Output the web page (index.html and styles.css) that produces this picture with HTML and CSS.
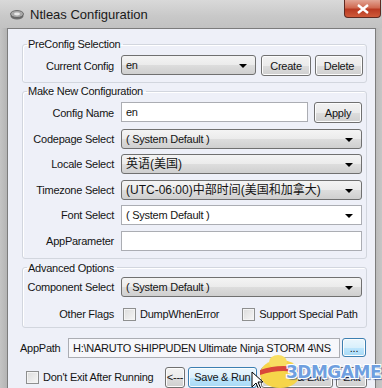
FILE: index.html
```html
<!DOCTYPE html>
<html>
    <head>
        <title>Ntleas Configuration</title>
        <meta charset="utf-8">
        <link rel="stylesheet" href="styles.css">
    </head>
    <body>
        <div class="nt-window">
            <div class="nt-titlebar">
                <svg class="nt-titlebar__icon" width="14" height="10" viewBox="0 0 14 10">
                    <ellipse cx="7" cy="6" rx="6.5" ry="3.5" fill="#6d6d6d"/>
                    <ellipse cx="7" cy="4" rx="6.5" ry="3.5" fill="#a9a9a9" stroke="#5a5a5a" stroke-width="0.8"/>
                    <ellipse cx="7" cy="4" rx="3" ry="1.4" fill="#e8e8e8"/>
                </svg>
                <span class="nt-titlebar__text">Ntleas Configuration</span>
                <div class="nt-titlebar__close">
                    <svg width="12" height="10" viewBox="0 0 12 10">
                        <path d="M1 1 L11 9 M11 1 L1 9" stroke="#fff" stroke-width="2.4"/>
                    </svg>
                </div>
            </div>

            <div class="nt-client">
                <fieldset class="nt-group nt-group--pre">
                    <legend>PreConfig Selection</legend>
                    <div class="nt-form">
                        <label class="nt-form__label">Current Config</label>
                        <div class="nt-form__controls">
                            <div class="nt-combo nt-combo--current">en<i class="nt-combo__arrow"></i></div>
                            <button class="nt-btn nt-btn--create">Create</button>
                            <button class="nt-btn nt-btn--delete">Delete</button>
                        </div>
                    </div>
                </fieldset>

                <fieldset class="nt-group nt-group--new">
                    <legend>Make New Configuration</legend>
                    <div class="nt-form">
                        <label class="nt-form__label">Config Name</label>
                        <div class="nt-form__controls">
                            <div class="nt-input nt-input--name">en</div>
                            <button class="nt-btn nt-btn--apply">Apply</button>
                        </div>

                        <label class="nt-form__label">Codepage Select</label>
                        <div class="nt-combo">( System Default )<i class="nt-combo__arrow"></i></div>

                        <label class="nt-form__label">Locale Select</label>
                        <div class="nt-combo nt-combo--cjk">英语(美国)<i class="nt-combo__arrow"></i></div>

                        <label class="nt-form__label">Timezone Select</label>
                        <div class="nt-combo nt-combo--cjk">(UTC-06:00)中部时间(美国和加拿大)<i class="nt-combo__arrow"></i></div>

                        <label class="nt-form__label">Font Select</label>
                        <div class="nt-combo nt-combo--edit">( System Default )<i class="nt-combo__arrow"></i></div>

                        <label class="nt-form__label">AppParameter</label>
                        <div class="nt-input"></div>
                    </div>
                </fieldset>

                <fieldset class="nt-group nt-group--adv">
                    <legend>Advanced Options</legend>
                    <div class="nt-form">
                        <label class="nt-form__label">Component Select</label>
                        <div class="nt-combo">( System Default )<i class="nt-combo__arrow"></i></div>

                        <label class="nt-form__label">Other Flags</label>
                        <div class="nt-flags">
                            <span class="nt-check"><i class="nt-check__box"></i>DumpWhenError</span>
                            <span class="nt-check"><i class="nt-check__box"></i>Support Special Path</span>
                        </div>
                    </div>
                </fieldset>

                <div class="nt-apppath">
                    <label class="nt-apppath__label">AppPath</label>
                    <div class="nt-input nt-input--path">H:\NARUTO SHIPPUDEN Ultimate Ninja STORM 4\NS</div>
                    <button class="nt-btn nt-btn--blue nt-btn--browse">...</button>
                </div>

                <div class="nt-footer">
                    <span class="nt-check nt-check--noexit"><i class="nt-check__box"></i>Don't Exit After Running</span>
                    <button class="nt-btn nt-btn--back">&lt;---</button>
                    <button class="nt-btn nt-btn--blue nt-btn--run">Save &amp; Run</button>
                    <button class="nt-btn nt-btn--exit">Save &amp; Exit</button>
                    <button class="nt-btn nt-btn--close">Exit</button>
                </div>
            </div>

            <!-- site watermark sitting over the bottom buttons -->
            <div class="nt-watermark">
                <svg class="nt-watermark__chick" width="48" height="34" viewBox="0 0 48 34">
                    <ellipse cx="24" cy="20" rx="20" ry="14" fill="#f6d54a"/>
                    <ellipse cx="22" cy="8" rx="9" ry="7" fill="#f8de62"/>
                    <path d="M4 16 Q24 9 44 14 L44 19 Q24 14 4 21 Z" fill="#d9473a"/>
                    <path d="M36 21 l7 -2 l-2 6 z" fill="#f0a030"/>
                </svg>
                <span class="nt-watermark__text">3DMGAME</span>
                <svg class="nt-watermark__cursor" width="14" height="20" viewBox="0 0 14 20">
                    <path d="M1 1 L1 16 L5 12 L8 19 L10 18 L7 11 L12 11 Z" fill="#fff" stroke="#000" stroke-width="1"/>
                </svg>
            </div>
        </div>
    </body>
</html>
```

FILE: styles.css
```css
* {
    box-sizing: border-box;
}

body {
    margin: 0;
    font-family: "Liberation Sans", Arial, sans-serif;
    font-size: 11px;
    letter-spacing: -0.25px;
    color: #141414;
    background: #bdbdbd;
}

.nt-window {
    position: relative;
    width: 382px;
    height: 388px;
    overflow: hidden;
    background: linear-gradient(to right, #c4c4c4, #b4b4b4 7px, #b9b9b9 375px, #c6c6c6);
}

.nt-titlebar {
    display: flex;
    align-items: center;
    height: 28px;
    padding-left: 10px;
    background: linear-gradient(to bottom, #d9d9d9, #c8c8c8 60%, #c2c2c2);
}

.nt-titlebar__icon {
    margin-top: 2px;
}

.nt-titlebar__text {
    margin-left: 6px;
    font-size: 13px;
    letter-spacing: 0;
    color: #1a1a1a;
}

.nt-titlebar__close {
    display: flex;
    align-items: center;
    justify-content: center;
    align-self: flex-start;
    margin-left: auto;
    margin-right: 1px;
    width: 37px;
    height: 18px;
    border: 1px solid #5e2a22;
    border-top: none;
    border-radius: 0 0 4px 4px;
    background: linear-gradient(to bottom, #e2a595, #d06a52 45%, #b93a22 55%, #cf5a3a);
}

.nt-client {
    margin: 0 6px 0 7px;
    height: 360px;
    padding: 8px 8px 0 14px;
    border: 1px solid #7c7c7c;
    border-bottom: none;
    background: #eef0f8;
}

.nt-group {
    margin: 0;
    padding: 0 4px 6px 0;
    border: 1px solid #d2d6de;
    border-radius: 3px;
    box-shadow: inset 1px 1px 0 #fff;
    min-width: 0;
}

.nt-group legend {
    margin-left: 4px;
    padding: 0 3px 0 1px;
    line-height: 14px;
}

.nt-group--pre .nt-form {
    margin-top: 4px;
}

.nt-group--new {
    margin-top: 1px;
    padding-bottom: 7px;
}

.nt-group--new .nt-form {
    margin-top: 4px;
}

.nt-group--adv {
    margin-top: 2px;
    padding-bottom: 6px;
}

.nt-group--adv .nt-form {
    margin-top: 2px;
    row-gap: 11px;
}

.nt-form {
    display: grid;
    grid-template-columns: 91px 1fr;
    column-gap: 7px;
    row-gap: 5.6px;
    align-items: center;
}

.nt-form__label {
    justify-self: end;
    white-space: nowrap;
}

.nt-form__controls {
    display: flex;
    gap: 5px;
}

.nt-combo {
    position: relative;
    height: 20px;
    line-height: 18px;
    padding: 0 22px 0 4px;
    border: 1px solid #707070;
    border-radius: 3px;
    background: linear-gradient(to bottom, #f4f4f4, #ebebeb 50%, #dddddd 51%, #cfcfcf);
    white-space: nowrap;
    overflow: hidden;
}

.nt-combo--current {
    width: 135px;
}

.nt-combo--cjk {
    font-family: "Liberation Sans", "Noto Sans CJK SC", sans-serif;
    font-size: 12px;
    letter-spacing: 0;
}

.nt-combo--edit {
    border-color: #abadb3;
    border-radius: 0;
    background: #fff;
}

.nt-combo__arrow {
    position: absolute;
    right: 8px;
    top: 8px;
    border-left: 4px solid transparent;
    border-right: 4px solid transparent;
    border-top: 4px solid #000;
}

.nt-input {
    height: 20px;
    line-height: 18px;
    padding: 0 4px;
    border: 1px solid #abadb3;
    background: #fff;
    white-space: nowrap;
    overflow: hidden;
}

.nt-input--name {
    flex: 1;
}

.nt-btn {
    height: 21px;
    padding: 0;
    font-family: inherit;
    font-size: 11px;
    letter-spacing: inherit;
    color: #141414;
    border: 1px solid #707070;
    border-radius: 3px;
    background: linear-gradient(to bottom, #f2f2f2, #ebebeb 50%, #dddddd 51%, #cfcfcf);
    box-shadow: inset 0 0 0 1px #fcfcfc;
}

.nt-btn--create {
    width: 50px;
}

.nt-btn--delete {
    width: 48px;
    margin-left: -1px;
}

.nt-btn--apply {
    width: 48px;
    margin-left: 1px;
}

.nt-btn--blue {
    border-color: #3c7fb1;
    background: linear-gradient(to bottom, #eaf6fd, #d9f0fc 50%, #bee6fd 51%, #a7d9f5);
}

.nt-flags {
    display: flex;
    gap: 23px;
    padding-left: 2px;
}

.nt-check {
    display: inline-flex;
    align-items: center;
    gap: 4px;
    white-space: nowrap;
}

.nt-check__box {
    width: 13px;
    height: 13px;
    border: 1px solid #8e8f8f;
    background: linear-gradient(135deg, #dcdcdc, #f6f6f6);
    box-shadow: inset 0 0 0 1px #f4f4f4;
}

.nt-apppath {
    display: flex;
    align-items: center;
    margin: 10px 0 0 -2px;
}

.nt-apppath__label {
    width: 48px;
}

.nt-input--path {
    width: 272px;
    background: #f7f7fb;
}

.nt-btn--browse {
    width: 24px;
    height: 19px;
    margin-left: 2px;
}

.nt-footer {
    display: flex;
    align-items: center;
    margin: 9px 0 0 4px;
}

.nt-check--noexit {
    margin-right: 12px;
}

.nt-btn--back {
    width: 20px;
}

.nt-btn--run {
    width: 73px;
    margin-left: 3px;
}

.nt-btn--exit {
    width: 76px;
    margin-left: 4px;
}

.nt-btn--close {
    width: 32px;
    margin-left: 3px;
}

.nt-watermark {
    position: absolute;
    left: 250px;
    top: 354px;
    width: 132px;
    height: 34px;
}

.nt-watermark__chick {
    position: absolute;
    left: 6px;
    top: 0;
}

.nt-watermark__text {
    position: absolute;
    left: 36px;
    top: 8px;
    font-family: "DejaVu Sans", sans-serif;
    font-weight: bold;
    font-size: 17px;
    letter-spacing: -0.5px;
    color: #6f9fe0;
    text-shadow: -1px -1px 0 #fff, 1px -1px 0 #fff, -1px 1px 0 #fff, 1px 1px 0 #fff, 2px 2px 1px rgba(40, 70, 140, 0.6);
}

.nt-watermark__cursor {
    position: absolute;
    left: 1px;
    top: 17px;
}
```
